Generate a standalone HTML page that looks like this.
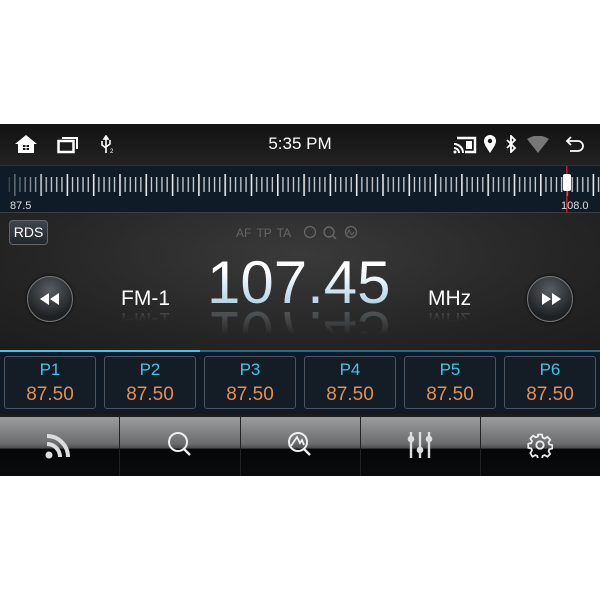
<!DOCTYPE html>
<html><head><meta charset="utf-8"><style>
*{margin:0;padding:0;box-sizing:border-box}
body{width:600px;height:600px;background:#fff;position:relative;overflow:hidden;font-family:"Liberation Sans",sans-serif}
.abs{position:absolute}
#ui{left:0;top:124px;width:600px;height:352px;background:#1c1c1c;overflow:hidden}
#status{left:0;top:0;width:600px;height:41px;background:linear-gradient(#121212,#222)}
#tuner{left:0;top:41px;width:600px;height:48px;background:#0f1b27;border-top:1px solid #2a3440;border-bottom:1px solid #3a3f45}
#main{left:0;top:89px;width:600px;height:137px;background:radial-gradient(ellipse at 50% 30%,#3a3a3a,#262626 60%,#1c1c1c)}
.btn{width:46px;height:46px;border-radius:50%;background:radial-gradient(circle at 50% 30%,#5a5e62,#1e2124 70%);border:1px solid #777;box-shadow:0 0 3px #000}
.freq{font-size:60px;background:linear-gradient(#ffffff 30%,#9cc6de);-webkit-background-clip:text;color:transparent;line-height:1}
#presets{left:0;top:226px;width:600px;height:64px;background:#0f1a24;border-top:2px solid #1e6f88}
.p{top:4px;width:92px;height:53px;border:1px solid #4a5560;border-radius:3px;background:#141d26;text-align:center}
.p .a{color:#3fc5e6;font-size:17px;margin-top:3px}
.p .b{color:#e39050;font-size:19px;margin-top:4px}
#bottom{left:0;top:293px;width:600px;height:59px;background:linear-gradient(#9a9c9e,#6a6c6e 45%,#4a4c4e 53%,#050607 54%,#0a0b0c)}
.div{top:0;width:1px;height:59px;background:#222}
</style></head><body>
<div id="ui" class="abs">
 <div id="status" class="abs">
  <svg class="abs" style="left:14px;top:10px" width="24" height="20" viewBox="0 0 24 20"><path d="M12 1 L1 10 H4 V19 H20 V10 H23 Z" fill="#fff"/><rect x="9" y="11" width="6" height="5" fill="#1a1a1a"/><path d="M12 11v5M9 13.5h6" stroke="#fff" stroke-width="1"/></svg>
  <svg class="abs" style="left:57px;top:12px" width="22" height="18" viewBox="0 0 22 18"><rect x="1.5" y="5" width="15" height="11" fill="none" stroke="#fff" stroke-width="2.5"/><path d="M5 2H20V13" fill="none" stroke="#fff" stroke-width="2"/></svg>
  <svg class="abs" style="left:100px;top:11px" width="16" height="20" viewBox="0 0 16 20"><path d="M6 1v17M6 1l-2 3h4zM2 6v4l4 3M10 5v4l-4 3" stroke="#fff" stroke-width="1.6" fill="none"/><text x="10" y="18" font-size="6" fill="#fff">2</text></svg>
  <div class="abs" style="left:0;width:600px;top:10px;text-align:center;color:#fff;font-size:17px">5:35 PM</div>
  <svg class="abs" style="left:453px;top:12px" width="24" height="18" viewBox="0 0 24 18"><path d="M4 2H22V16H12" fill="none" stroke="#fff" stroke-width="2.4"/><path d="M1 8a9 9 0 0 1 9 9M1 12a5 5 0 0 1 5 5" stroke="#fff" stroke-width="2" fill="none"/><circle cx="2" cy="16" r="1.5" fill="#fff"/><rect x="13" y="5" width="6" height="8" fill="#fff"/></svg>
  <svg class="abs" style="left:483px;top:10px" width="14" height="20" viewBox="0 0 14 20"><path d="M7 19C3 13 1 10 1 7a6 6 0 0 1 12 0c0 3-2 6-6 12z" fill="#fff"/><circle cx="7" cy="7" r="2.2" fill="#1a1a1a"/></svg>
  <svg class="abs" style="left:505px;top:11px" width="12" height="18" viewBox="0 0 12 18"><path d="M2 5l8 8-4 4V1l4 4-8 8" stroke="#fff" stroke-width="1.8" fill="none"/></svg>
  <svg class="abs" style="left:526px;top:12px" width="24" height="17" viewBox="0 0 24 17"><path d="M1 3Q12-4 23 3L12 17Z" fill="#777"/></svg>
  <svg class="abs" style="left:565px;top:11px" width="20" height="18" viewBox="0 0 20 18"><path d="M6 2L2 6l4 4M2 6h11a5 5 0 0 1 0 10H5" stroke="#fff" stroke-width="1.8" fill="none"/></svg>
 </div>
 <div id="tuner" class="abs">
  <svg class="abs" style="left:0;top:0" width="600" height="48">
   <defs><pattern id="tk" x="14" y="0" width="26.3" height="48" patternUnits="userSpaceOnUse">
    <rect x="0" y="8" width="1.6" height="22" fill="#e8e8e8"/>
    <rect x="5.3" y="11" width="1.3" height="15" fill="#cfd3d6"/>
    <rect x="10.5" y="11" width="1.3" height="15" fill="#cfd3d6"/>
    <rect x="15.8" y="11" width="1.3" height="15" fill="#cfd3d6"/>
    <rect x="21" y="11" width="1.3" height="15" fill="#cfd3d6"/>
   </pattern>
   <linearGradient id="fd" x1="0" x2="1"><stop offset="0" stop-color="#fff" stop-opacity="0.1"/><stop offset="0.08" stop-color="#fff" stop-opacity="1"/></linearGradient>
   <mask id="mk"><rect width="600" height="48" fill="url(#fd)"/></mask></defs>
   <rect x="8" y="0" width="592" height="48" fill="url(#tk)" mask="url(#mk)"/>
   <rect x="566" y="0" width="1.5" height="48" fill="#c0202a"/>
   <rect x="563" y="8" width="8" height="17" rx="2" fill="#fff"/>
  </svg>
  <div class="abs" style="left:10px;top:34px;color:#ddd;font-size:11px">87.5</div>
  <div class="abs" style="left:561px;top:34px;color:#ddd;font-size:11px">108.0</div>
 </div>
 <div id="main" class="abs">
  <div class="abs" style="left:9px;top:7px;width:39px;height:25px;border:1px solid #666;border-radius:4px;background:linear-gradient(#3e464e,#20262c);color:#fff;font-size:14px;text-align:center;line-height:23px">RDS</div>
  <div class="abs" style="left:236px;top:13px;color:#666;font-size:12px;word-spacing:2px">AF TP TA</div>
  <svg class="abs" style="left:303px;top:12px" width="60" height="16"><circle cx="7" cy="7" r="5.5" stroke="#666" fill="none" stroke-width="1.3"/><circle cx="26" cy="7" r="5" stroke="#666" fill="none" stroke-width="1.4"/><path d="M30 11l3 3" stroke="#666" stroke-width="1.5"/><circle cx="48" cy="7" r="5.5" stroke="#666" fill="none" stroke-width="1.3"/><path d="M44 9l2-4 3 5 2-3" stroke="#666" fill="none"/></svg>
  <div class="abs btn" style="left:27px;top:63px"></div>
  <svg class="abs" style="left:38px;top:79px" width="24" height="14"><path d="M11 1L2 7l9 6zM21 1l-9 6 9 6z" fill="#fff"/></svg>
  <div class="abs btn" style="left:527px;top:63px"></div>
  <svg class="abs" style="left:539px;top:79px" width="24" height="14"><path d="M3 1l9 6-9 6zM13 1l9 6-9 6z" fill="#fff"/></svg>
  <div class="abs" style="left:121px;top:74px;color:#fff;font-size:21px">FM-1</div>
  <div class="abs" style="left:121px;top:94px;color:#fff;font-size:21px;transform:scaleY(-1);opacity:.25;-webkit-mask:linear-gradient(transparent 40%,#000)">FM-1</div>
  <div class="abs" style="left:428px;top:74px;color:#fff;font-size:21px">MHz</div>
  <div class="abs" style="left:428px;top:94px;color:#fff;font-size:21px;transform:scaleY(-1);opacity:.25;-webkit-mask:linear-gradient(transparent 40%,#000)">MHz</div>
  <div class="abs freq" style="left:207px;top:40px">107.45</div>
  <div class="abs freq" style="left:207px;top:89px;transform:scaleY(-1);opacity:.35;-webkit-mask:linear-gradient(transparent 45%,#000)">107.45</div>
 </div>
 <div id="presets" class="abs">
  <div class="abs" style="left:0;top:-2px;width:200px;height:2px;background:#3cc8e6"></div>
  <div class="abs p" style="left:4px"><div class="a">P1</div><div class="b">87.50</div></div>
  <div class="abs p" style="left:104px"><div class="a">P2</div><div class="b">87.50</div></div>
  <div class="abs p" style="left:204px"><div class="a">P3</div><div class="b">87.50</div></div>
  <div class="abs p" style="left:304px"><div class="a">P4</div><div class="b">87.50</div></div>
  <div class="abs p" style="left:404px"><div class="a">P5</div><div class="b">87.50</div></div>
  <div class="abs p" style="left:504px"><div class="a">P6</div><div class="b">87.50</div></div>
 </div>
 <div id="bottom" class="abs">
  <div class="abs div" style="left:119px"></div><div class="abs div" style="left:240px"></div><div class="abs div" style="left:360px"></div><div class="abs div" style="left:480px"></div>
  <svg class="abs" style="left:44px;top:13px" width="30" height="30" viewBox="0 0 30 30"><circle cx="5" cy="25" r="3.5" fill="#ddd"/><path d="M3 14a13 13 0 0 1 13 13M3 6a21 21 0 0 1 21 21" stroke="#ddd" stroke-width="4" fill="none"/></svg>
  <svg class="abs" style="left:165px;top:13px" width="30" height="30" viewBox="0 0 30 30"><circle cx="13" cy="12" r="9" stroke="#eee" stroke-width="2" fill="none"/><path d="M19 19l6 6" stroke="#eee" stroke-width="2.4"/></svg>
  <svg class="abs" style="left:285px;top:13px" width="30" height="30" viewBox="0 0 30 30"><circle cx="13" cy="12" r="9" stroke="#eee" stroke-width="2" fill="none"/><path d="M19 19l6 6" stroke="#eee" stroke-width="2.4"/><path d="M6 16L12 7l3 6 2-3 2 5" stroke="#eee" stroke-width="1.8" fill="none"/></svg>
  <svg class="abs" style="left:406px;top:12px" width="28" height="32" viewBox="0 0 28 32"><g stroke="#ddd" stroke-width="2.4"><path d="M5 3v26M14 3v26M23 3v26"/></g><circle cx="5" cy="10" r="3.3" fill="#ddd"/><circle cx="14" cy="21" r="3.3" fill="#ddd"/><circle cx="23" cy="10" r="3.3" fill="#ddd"/></svg>
  <svg class="abs" style="left:527px;top:15px" width="26" height="26" viewBox="0 0 24 24"><path d="M10 2h4l.6 3 2 1 2.6-1.7 2.8 2.8L20.3 9.7l.8 2 2.9.6v3.4l-2.9.6-.8 2 1.7 2.6-2.8 2.8-2.6-1.7-2 .8-.6 2.9h-4l-.6-2.9-2-.8-2.6 1.7L2.6 20.1l1.7-2.6-.8-2L.6 15v-4l2.9-.6.8-2L2.6 5.9l2.8-2.8L8 4.8l2-.8z" stroke="#eee" stroke-width="1.7" fill="none" stroke-linejoin="round" transform="scale(.95) translate(.6 .4)"/><circle cx="12" cy="12" r="3.4" stroke="#eee" stroke-width="1.7" fill="none"/></svg>
 </div>
</div>
</body></html>
